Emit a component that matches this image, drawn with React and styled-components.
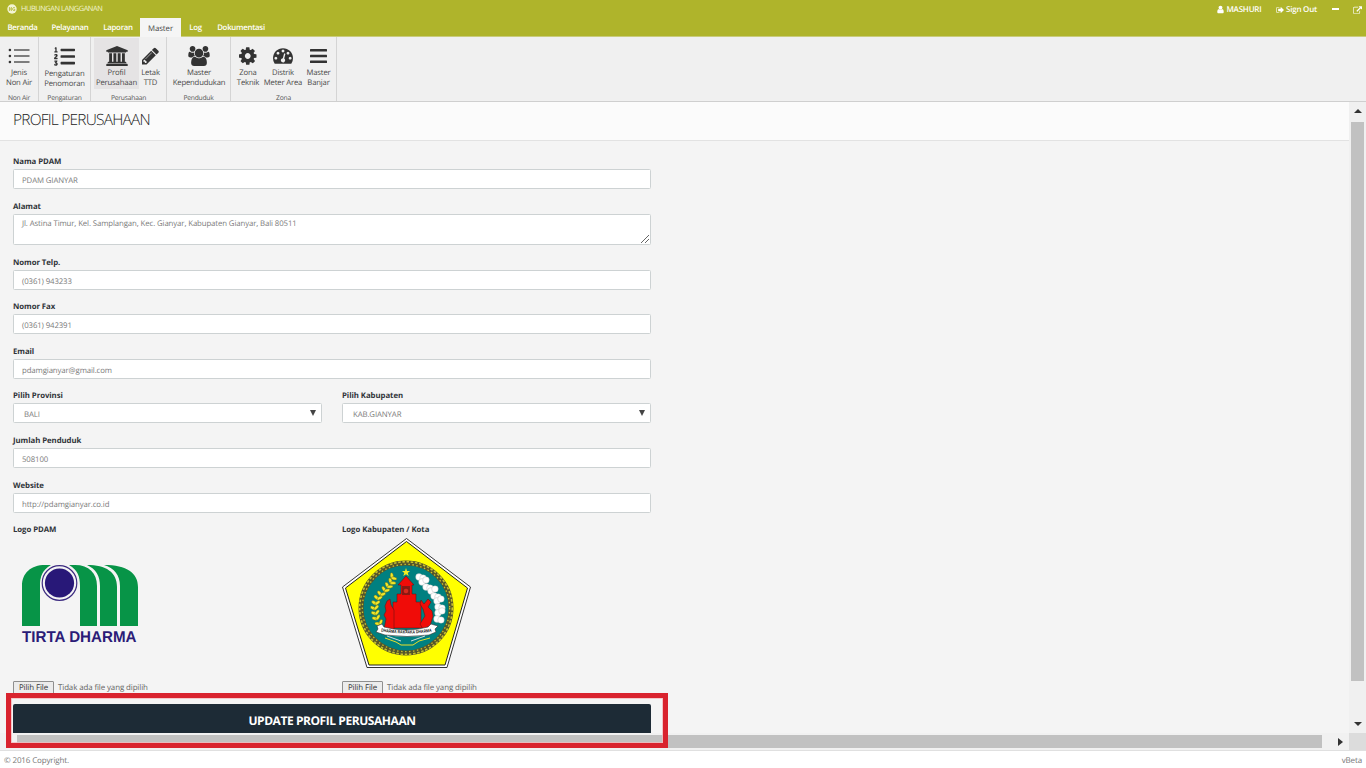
import React from 'react';
import styled, { createGlobalStyle } from 'styled-components';
import { FaListOl } from 'react-icons/fa';

const GlobalStyle = createGlobalStyle`
  * { box-sizing: border-box; }
  body {
    margin: 0;
    overflow: hidden;
    background: #fff;
    font-family: 'Open Sans', 'Noto Sans', sans-serif;
    font-size: 8px;
    color: #444;
    text-rendering: geometricPrecision;
  }
`;

const Page = styled.div`
  position: relative;
  width: 1366px;
  height: 768px;
  display: flex;
  flex-direction: column;
  overflow: hidden;
`;

const Header = styled.header`
  height: 37px;
  background: #afb42b;
  color: #fff;
  border-bottom: 1px solid #c9cc7c;
  display: flex;
  justify-content: space-between;
`;

const Brand = styled.div`
  height: 18px;
  padding-left: 7px;
  display: flex;
  align-items: center;
  gap: 4px;
  font-size: 7.4px;
  letter-spacing: -0.45px;
  line-height: 17px;
  color: #f3f4d4;

  svg { margin-top: -1px; }
`;

const Tabs = styled.nav`
  display: flex;
  height: 19px;
  padding-left: 1px;
`;

const Tab = styled.a`
  width: ${(p) => p.$width}px;
  height: ${(p) => (p.$active ? 19 : 18)}px;
  line-height: ${(p) => (p.$active ? 22 : 20)}px;
  text-align: center;
  white-space: nowrap;
  font-size: 7.8px;
  font-weight: ${(p) => (p.$active ? 400 : 600)};
  letter-spacing: ${(p) => (p.$active ? -0.05 : -0.24)}px;
  color: ${(p) => (p.$active ? '#444' : '#fff')};
  background: ${(p) => (p.$active ? '#f5f5f5' : 'transparent')};
`;

const UserBar = styled.div`
  height: 19px;
  padding-right: 4px;
  display: flex;
  align-items: center;
  font-size: 8px;
  font-weight: 600;
`;

const UserItem = styled.span`
  display: flex;
  align-items: center;
  gap: 1.5px;
  margin-left: ${(p) => p.$gap || 0}px;
  letter-spacing: -0.22px;
`;

const Dash = styled.span`
  width: 7px;
  height: 2px;
  margin: -1px 0 0 15px;
  background: #fff;
`;

const Ribbon = styled.div`
  height: 65px;
  background: #f0f0f0;
  border-bottom: 1px solid #cfcfcf;
  display: flex;
`;

const Group = styled.section`
  width: ${(p) => p.$width}px;
  border-right: 1px solid #d4d4d4;
  display: flex;
  flex-direction: column;
`;

const GroupItems = styled.div`
  display: flex;
  height: 53px;
  padding-top: 1px;
  padding-left: ${(p) => p.$inset || 0}px;
`;

const GroupName = styled.div`
  height: 11px;
  line-height: 16px;
  font-size: 6.7px;
  letter-spacing: -0.2px;
  text-align: center;
  color: #555;
`;

const RibbonButton = styled.div`
  width: ${(p) => p.$width}px;
  height: 51px;
  flex: none;
  background: ${(p) => (p.$active ? '#e5e3e4' : 'transparent')};
  color: #333;
  display: flex;
  flex-direction: column;
  align-items: center;
  padding-top: 8px;
`;

const RibbonText = styled.span`
  margin-top: 2px;
  font-size: 7.7px;
  line-height: 10px;
  letter-spacing: -0.17px;
  text-align: center;
  white-space: pre;
  color: #4a4a4a;
`;

const Workspace = styled.div`
  height: 648px;
  display: flex;
  background: #f4f4f4;
`;

const Viewport = styled.main`
  width: 1349px;
  display: flex;
  flex-direction: column;
`;

const Heading = styled.h1`
  margin: 0;
  height: 39px;
  flex: none;
  padding-left: 13px;
  background: #fbfbfb;
  border-bottom: 1px solid #e2e2e2;
  font-size: 15.5px;
  font-weight: 300;
  letter-spacing: -0.8px;
  line-height: 35px;
  color: #222;
`;

const Form = styled.form`
  height: 592px;
  width: 664px;
  padding: 12.4px 13px 0;
  overflow: hidden;
  display: flex;
  flex-direction: column;
`;

const Field = styled.div`
  width: ${(p) => (p.$half ? '309px' : 'auto')};
  margin-bottom: ${(p) => (p.$flush ? 0 : 8.6)}px;
  flex: none;
`;

const Label = styled.label`
  display: block;
  height: 16px;
  line-height: 18px;
  font-size: 7.8px;
  font-weight: 700;
  letter-spacing: -0.06px;
  color: #2f3338;
`;

const Box = styled.div`
  position: relative;
  height: ${(p) => p.$height || 20}px;
  padding: 0 8px 0 ${(p) => p.$inset || 8}px;
  background: #fff;
  border: 1px solid #cdd2d3;
  border-radius: 1.5px;
  display: flex;
  justify-content: space-between;
  line-height: ${(p) => (p.$height ? 19 : 22)}px;
  font-size: 7.8px;
  letter-spacing: -0.11px;
  white-space: nowrap;
  color: #7b7b7b;
`;

const Grip = styled.svg`
  position: absolute;
  right: 0;
  bottom: 0;
`;

const Caret = styled.span`
  width: 0;
  height: 0;
  margin: 6px -3px 0 0;
  border: 3.5px solid transparent;
  border-top: 6px solid #444;
  border-bottom: 0;
`;

const Columns = styled.div`
  display: flex;
  gap: 20px;
  flex: none;
`;

const LogoArea = styled.div`
  height: 144px;
  padding-left: ${(p) => p.$inset || 0}px;
  padding-top: ${(p) => p.$top || 0}px;
`;

const FilePicker = styled.div`
  height: 22.5px;
  display: flex;
  gap: 4px;
  font-size: 7.9px;
  line-height: 14px;
  letter-spacing: -0.1px;
  color: #666;
`;

const FileButton = styled.span`
  width: 41px;
  height: 14px;
  border: 1px solid #8f8f8f;
  border-radius: 1px;
  background: #ececec;
  text-align: center;
  line-height: 12px;
  color: #333;
`;

const Submit = styled.div`
  height: 29px;
  flex: none;
  background: #1d2b36;
  color: #fff;
  border-radius: 2px 2px 0 0;
  text-align: center;
  font-size: 12px;
  line-height: 33px;
  font-weight: 700;
  letter-spacing: -0.44px;
`;

const HScroll = styled.div`
  height: 17px;
  padding: 2px 6px 2px 17px;
  background: #f1f1f1;
  display: flex;
  align-items: center;
  justify-content: space-between;
`;

const HThumb = styled.div`
  width: 1305px;
  height: 13px;
  background: #c1c1c1;
`;

const VScroll = styled.div`
  width: 17px;
  background: #f0f0f0;
  display: flex;
  flex-direction: column;
  align-items: center;
`;

const VThumb = styled.div`
  width: 13px;
  height: 559px;
  margin: 6px 0 40px;
  background: #c1c1c1;
`;

const Corner = styled.div`
  width: 17px;
  height: 17px;
  margin-top: auto;
  background: #dcdcdc;
`;

const Arrow = styled.svg`
  flex: none;
  margin-top: ${(p) => p.$top || 0}px;
`;

const Footer = styled.footer`
  height: 18px;
  padding: 0 4px;
  background: #fff;
  border-top: 1px solid #e0e0e0;
  display: flex;
  justify-content: space-between;
  font-size: 8px;
  line-height: 19px;
  letter-spacing: -0.14px;
  color: #777;
`;

const Highlight = styled.div`
  position: absolute;
  left: 6px;
  top: 693px;
  width: 662px;
  height: 55px;
  border: 5px solid #d9232e;
  box-shadow: inset 0 0 0 0.8px #f3b9bc;
`;

const paths = {
  user: ['0 0 1792 1792', 'M1536 1399q0 109-62.5 187t-150.5 78h-854q-88 0-150.5-78t-62.5-187q0-85 8.5-160.5t31.5-152 58.5-131 94-89 134.5-34.5q131 128 313 128t313-128q76 0 134.5 34.5t94 89 58.5 131 31.5 152 8.5 160.5zm-256-887q0 159-112.5 271.5t-271.5 112.5-271.5-112.5-112.5-271.5 112.5-271.5 271.5-112.5 271.5 112.5 112.5 271.5z'],
  signOut: ['0 128 1664 1536', 'M704 1440q0 4 1 20t.5 26.5-3 23.5-10 19.5-20.5 6.5h-320q-119 0-203.5-84.5t-84.5-203.5v-704q0-119 84.5-203.5t203.5-84.5h320q13 0 22.5 9.5t9.5 22.5q0 4 1 20t.5 26.5-3 23.5-10 19.5-20.5 6.5h-320q-66 0-113 47t-47 113v704q0 66 47 113t113 47h312l11.5 1 11.5 3 8 5.5 7 9 2 13.5zm928-544q0 26-19 45l-544 544q-19 19-45 19t-45-19-19-45v-288h-448q-26 0-45-19t-19-45v-384q0-26 19-45t45-19h448v-288q0-26 19-45t45-19 45 19l544 544q19 19 19 45z'],
  external: ['0 0 1792 1536', 'M1408 928v320q0 119-84.5 203.5t-203.5 84.5h-832q-119 0-203.5-84.5t-84.5-203.5v-832q0-119 84.5-203.5t203.5-84.5h704q14 0 23 9t9 23v64q0 14-9 23t-23 9h-704q-66 0-113 47t-47 113v832q0 66 47 113t113 47h832q66 0 113-47t47-113v-320q0-14 9-23t23-9h64q14 0 23 9t9 23zm384-864v512q0 26-19 45t-45 19-45-19l-176-176-652 652q-10 10-23 10t-23-10l-114-114q-10-10-10-23t10-23l652-652-176-176q-19-19-19-45t19-45 45-19h512q26 0 45 19t19 45z'],
  university: ['0 0 1920 1792', 'M960 0l960 384v128h-128q0 26-20.5 45t-48.5 19h-1526q-28 0-48.5-19t-20.5-45h-128v-128zM256 640h256v768h128v-768h256v768h128v-768h256v768h128v-768h256v768h59q28 0 48.5 19t20.5 45v64h-1664v-64q0-26 20.5-45t48.5-19h59zM1851 1600q28 0 48.5 19t20.5 45v128h-1920v-128q0-26 20.5-45t48.5-19z'],
  pencil: ['128 128 1536 1536', 'M491 1536l91-91-235-235-91 91v107h128v128h107zm523-928q0-22-22-22-10 0-17 7l-542 542q-7 7-7 17 0 22 22 22 10 0 17-7l542-542q7-7 7-17zm-54-192l416 416-832 832h-416v-416zm683 96q0 53-37 90l-166 166-416-416 166-165q36-38 90-38 53 0 91 38l235 234q37 39 37 91z'],
  users: ['64 0 1920 1792', 'M657 896q-162 5-265 128h-134q-82 0-138-40.5t-56-118.5q0-353 124-353 6 0 43.5 21t97.5 42.5 119 21.5q67 0 133-23-5 37-5 66 0 139 81 256zm1071 637q0 120-73 189.5t-194 69.5h-874q-121 0-194-69.5t-73-189.5q0-53 3.5-103.5t14-109 26.5-108.5 43-97.5 62-81 85.5-53.5 111.5-20q10 0 43 21.5t73 48 107 48 135 21.5 135-21.5 107-48 73-48 43-21.5q61 0 111.5 20t85.5 53.5 62 81 43 97.5 26.5 108.5 14 109 3.5 103.5zm-1024-1277q0 106-75 181t-181 75-181-75-75-181 75-181 181-75 181 75 75 181zm704 384q0 159-112.5 271.5t-271.5 112.5-271.5-112.5-112.5-271.5 112.5-271.5 271.5-112.5 271.5 112.5 112.5 271.5zm576 225q0 78-56 118.5t-138 40.5h-134q-103-123-265-128 81-117 81-256 0-29-5-66 66 23 133 23 59 0 119-21.5t97.5-42.5 43.5-21q124 0 124 353zm-128-609q0 106-75 181t-181 75-181-75-75-181 75-181 181-75 181 75 75 181z'],
  cog: ['128 128 1536 1536', 'M1152 896q0-106-75-181t-181-75-181 75-75 181 75 181 181 75 181-75 75-181zm512-109v222q0 12-8 23t-20 13l-185 28q-19 54-39 91 35 50 107 138 10 12 10 25t-9 23q-27 37-99 108t-94 71q-12 0-26-9l-138-108q-44 23-91 38-16 136-29 186-7 28-36 28h-222q-14 0-24.5-8.5t-11.5-21.5l-28-184q-49-16-90-37l-141 107q-10 9-25 9-14 0-25-11-126-114-165-168-7-10-7-23 0-12 8-23 15-21 51-66.5t54-70.5q-27-50-41-99l-183-27q-13-2-21-12.5t-8-23.5v-222q0-12 8-23t19-13l186-28q14-46 39-92-40-57-107-138-10-12-10-24 0-10 9-23 26-36 98.5-107.5t94.5-71.5q13 0 26 10l138 107q44-23 91-38 16-136 29-186 7-28 36-28h222q14 0 24.5 8.5t11.5 21.5l28 184q49 16 90 37l142-107q9-9 24-9 13 0 25 10 129 119 165 170 7 8 7 22 0 12-8 23-15 21-51 66.5t-54 70.5q26 50 41 98l183 28q13 2 21 12.5t8 23.5z'],
  gauge: ['0 256 1792 1408', 'M384 1152q0-53-37.5-90.5t-90.5-37.5-90.5 37.5-37.5 90.5 37.5 90.5 90.5 37.5 90.5-37.5 37.5-90.5zm192-448q0-53-37.5-90.5t-90.5-37.5-90.5 37.5-37.5 90.5 37.5 90.5 90.5 37.5 90.5-37.5 37.5-90.5zm428 481l101-382q6-26-7.5-48.5t-38.5-29.5-48 6.5-30 39.5l-101 382q-60 5-107 43.5t-63 98.5q-20 77 20 146t117 89 146-20 89-117q16-60-6-117t-72-91zm660-33q0-53-37.5-90.5t-90.5-37.5-90.5 37.5-37.5 90.5 37.5 90.5 90.5 37.5 90.5-37.5 37.5-90.5zm-640-640q0-53-37.5-90.5t-90.5-37.5-90.5 37.5-37.5 90.5 37.5 90.5 90.5 37.5 90.5-37.5 37.5-90.5zm448 192q0-53-37.5-90.5t-90.5-37.5-90.5 37.5-37.5 90.5 37.5 90.5 90.5 37.5 90.5-37.5 37.5-90.5zm320 448q0 261-141 483-19 29-54 29h-1402q-35 0-54-29-141-221-141-483 0-182 71-348t191-286 286-191 348-71 348 71 286 191 191 286 71 348z'],
};

const Glyph = ({ name, width, height }) => (
  <svg width={width} height={height} viewBox={paths[name][0]} fill="currentColor">
    <path d={paths[name][1]} />
  </svg>
);

const BulletList = () => (
  <svg width="22" height="20" viewBox="0 0 22 20" fill="currentColor">
    {[4, 10, 16].map((y) => (
      <g key={y}>
        <circle cx="1.9" cy={y} r="1.3" />
        <rect x="6" y={y - 0.6} width="15.5" height="1.2" />
      </g>
    ))}
  </svg>
);

const Bars = () => (
  <svg width="17" height="20" viewBox="0 0 17 20" fill="currentColor">
    {[3, 8.7, 14.4].map((y) => (
      <rect key={y} x="0" y={y} width="17" height="2.6" rx="0.5" />
    ))}
  </svg>
);

const BrandMark = () => (
  <svg width="10" height="10" viewBox="0 0 10 10">
    <circle cx="5" cy="5" r="4.7" fill="#f3f4d4" />
    <path d="M2.4 3v4M2.4 5h1.8M4.3 3v4M7.8 3.6A1.6 1.6 0 1 0 7.8 6.5V5.2H6.6" fill="none" stroke="#afb42b" strokeWidth="0.8" />
  </svg>
);

const TirtaLogo = () => (
  <svg width="120" height="84" viewBox="0 0 120 84">
    <g fill="#079447">
      <path d="M1 62V22C1 9 10 1 24 1h6C21 6 19 13 19 22v40z" />
      <path d="M48 1h6c14 0 22 8 22 21v40H59V22C59 13 57 6 48 1z" />
      <path d="M66 1c19 0 30 7 30 22v39H79V22C79 12 75 5 66 1z" />
      <path d="M83 1c23 0 34 8 34 22v39H99V22C99 11 93 4 83 1z" />
    </g>
    <circle cx="38.500" cy="19" r="19" fill="#f4f4f4" />
    <circle cx="38.500" cy="19" r="17.300" fill="none" stroke="#3c2b80" strokeWidth="1.200" />
    <circle cx="38.500" cy="19" r="14.600" fill="#281878" />
    <text x="1" y="77.500" fontFamily="Liberation Sans" fontWeight="700" fontSize="15.500" textLength="114.500" lengthAdjust="spacingAndGlyphs" fill="#2b1b77">TIRTA DHARMA</text>
  </svg>
);

const leaves = [[42, 41, 50], [41, 46, 40], [38, 50, 30], [35, 54, 24], [31, 58, 16], [28, 62, 8], [26, 67, 0], [25, 72, -8], [26, 77, -14], [27, 82, -20], [30, 87, -28]];
const cotton = [[78, 40], [81, 45], [85, 50], [90, 54], [93, 59], [96, 64], [97, 70], [97, 76], [96, 82]];

const GianyarEmblem = () => (
  <svg width="131" height="132" viewBox="1 0 131 132">
    <path d="M65.500 1.500L129.500 50L106 130.500H26L1.500 50z" fill="#fff" stroke="#333" strokeWidth="1" />
    <path d="M65.500 4.500L126.500 51L104 128H28L4.500 51z" fill="#ff0" stroke="#222" strokeWidth="1" />
    <circle cx="65" cy="71" r="44.500" fill="#008080" />
    <circle cx="65" cy="71" r="45" fill="none" stroke="#55552a" strokeWidth="5" />
    <circle cx="65" cy="71" r="46.300" fill="none" stroke="#c9c22e" strokeWidth="1.600" strokeDasharray="2.500 1.700" />
    <circle cx="65" cy="71" r="43.700" fill="none" stroke="#c9c22e" strokeWidth="1.300" strokeDasharray="1.500 2.500" />
    <path d="M65 31l1 3h3l-2.300 2 1 3-2.700-1.800-2.700 1.800 1-3-2.300-2h3z" fill="#f4ee20" />
    {leaves.map(([x, y, r]) => (
      <g key={y} transform={`translate(${x + 9} ${y}) rotate(${r})`} fill="#f1e92a" stroke="#5c5b12" strokeWidth="0.400">
        <ellipse cx="-2" cy="0" rx="3.200" ry="1.600" transform="rotate(35)" />
        <ellipse cx="2" cy="0" rx="3" ry="1.500" transform="rotate(-38)" />
      </g>
    ))}
    {cotton.map(([x, y], i) => (
      <g key={y} fill="#fff" stroke="#999" strokeWidth="0.300">
        <circle cx={x} cy={y} r="3.400" />
        <circle cx={x + 4} cy={y + (i % 2 ? -2 : 1)} r="3.300" />
      </g>
    ))}
    <g fill="#f00c08" stroke="#5a1210" strokeWidth="0.500">
      <path d="M65 39l8 9h-2v9h4v8h5v21l8 5H43l9-6V65h4v-8h4v-9h-3z" />
      <path d="M46 64l3-2 1 6 3 5v19H43l2-10-2-4 2-4-1-5z" />
      <path d="M80 63l3 4 4-5 3 3-3 5 4 4 1 5-3 10-7 3-3-5 5-8-2-7-3-5z" />
    </g>
    <rect x="61" y="49" width="8" height="9" fill="#8b1a12" />
    <circle cx="65" cy="54" r="2.800" fill="#d62a1d" stroke="#5a1210" strokeWidth="0.500" />
    <path d="M36 89l5-2 2 3q22 6 44 0l3-3 7 2-3 3 1 3-7 3q-22 3-44 0l-9-3 2-3z" fill="#fff" stroke="#333" strokeWidth="0.600" />
    <path id="motto" d="M40 94.500Q65 98.500 92 94.500" fill="none" />
    <text fontFamily="Liberation Sans" fontSize="4.500" fontWeight="700" fill="#111">
      <textPath href="#motto" textLength="51" lengthAdjust="spacingAndGlyphs">DHARMA RAKSAKA DHARMA</textPath>
    </text>
    <path d="M44 101l11 4 5 3h12l6-4 11-3" fill="none" stroke="#e9df2b" strokeWidth="1" />
    <path d="M46 99l14 5M84 99l-14 5" fill="none" stroke="#e8e8e8" strokeWidth="0.900" />
  </svg>
);

const tabs = [['Beranda', 43], ['Pelayanan', 52], ['Laporan', 44], ['Master', 41, true], ['Log', 29], ['Dokumentasi', 62]];

const groups = [
  { name: 'Non Air', width: 39, items: [['Jenis\nNon Air', 38, <BulletList />]] },
  { name: 'Pengaturan', width: 52, items: [['Pengaturan\nPenomoran', 51, <FaListOl size={21} />]] },
  { name: 'Perusahaan', width: 76, inset: 3, items: [
    ['Profil\nPerusahaan', 45, <Glyph name="university" width={22} height={20} />, true],
    ['Letak\nTTD', 23, <Glyph name="pencil" width={17} height={20} />],
  ] },
  { name: 'Penduduk', width: 64, items: [['Master\nKependudukan', 64, <Glyph name="users" width={22} height={20} />]] },
  { name: 'Zona', width: 106, items: [
    ['Zona\nTeknik', 34, <Glyph name="cog" width={17.5} height={20} />],
    ['Distrik\nMeter Area', 36, <Glyph name="gauge" width={20} height={20} />],
    ['Master\nBanjar', 35, <Bars />],
  ] },
];

const TextField = ({ label, value }) => (
  <Field>
    <Label>{label}</Label>
    <Box>{value}</Box>
  </Field>
);

const SelectField = ({ label, value }) => (
  <Field $half>
    <Label>{label}</Label>
    <Box $inset={10}>{value}<Caret /></Box>
  </Field>
);

const FileField = () => (
  <FilePicker>
    <FileButton>Pilih File</FileButton>
    <span>Tidak ada file yang dipilih</span>
  </FilePicker>
);

export default function App() {
  return (
    <Page>
      <GlobalStyle />
      <Header>
        <div>
          <Brand><BrandMark />HUBUNGAN LANGGANAN</Brand>
          <Tabs>
            {tabs.map(([name, width, active]) => (
              <Tab key={name} $width={width} $active={active}>{name}</Tab>
            ))}
          </Tabs>
        </div>
        <UserBar>
          <UserItem><Glyph name="user" width={9} height={9} />MASHURI</UserItem>
          <UserItem $gap={15}><Glyph name="signOut" width={8} height={8} />Sign Out</UserItem>
          <Dash />
          <UserItem $gap={14}><Glyph name="external" width={9} height={8} /></UserItem>
        </UserBar>
      </Header>
      <Ribbon>
        {groups.map((g) => (
          <Group key={g.name} $width={g.width}>
            <GroupItems $inset={g.inset}>
              {g.items.map(([text, width, icon, active]) => (
                <RibbonButton key={text} $width={width} $active={active}>
                  {icon}
                  <RibbonText>{text}</RibbonText>
                </RibbonButton>
              ))}
            </GroupItems>
            <GroupName>{g.name}</GroupName>
          </Group>
        ))}
      </Ribbon>
      <Workspace>
        <Viewport>
          <Heading>PROFIL PERUSAHAAN</Heading>
          <Form>
            <TextField label="Nama PDAM" value="PDAM GIANYAR" />
            <Field>
              <Label>Alamat</Label>
              <Box $height={31}>
                Jl. Astina Timur, Kel. Samplangan, Kec. Gianyar, Kabupaten Gianyar, Bali 80511
                <Grip width="10" height="10" viewBox="0 0 10 10" stroke="#555" strokeWidth="0.9">
                  <path d="M1 9L9 1M5 9L9 5" />
                </Grip>
              </Box>
            </Field>
            <TextField label="Nomor Telp." value="(0361) 943233" />
            <TextField label="Nomor Fax" value="(0361) 942391" />
            <TextField label="Email" value="pdamgianyar@gmail.com" />
            <Columns>
              <SelectField label="Pilih Provinsi" value="BALI" />
              <SelectField label="Pilih Kabupaten" value="KAB.GIANYAR" />
            </Columns>
            <TextField label="Jumlah Penduduk" value="508100" />
            <TextField label="Website" value="http://pdamgianyar.co.id" />
            <Columns>
              <Field $half $flush>
                <Label>Logo PDAM</Label>
                <LogoArea $inset={8} $top={27}><TirtaLogo /></LogoArea>
                <FileField />
              </Field>
              <Field $half $flush>
                <Label>Logo Kabupaten / Kota</Label>
                <LogoArea><GianyarEmblem /></LogoArea>
                <FileField />
              </Field>
            </Columns>
            <Submit>UPDATE PROFIL PERUSAHAAN</Submit>
          </Form>
          <HScroll>
            <HThumb />
            <Arrow width="5" height="8" viewBox="0 0 5 8"><path d="M0 0l5 4-5 4z" fill="#333" /></Arrow>
          </HScroll>
        </Viewport>
        <VScroll>
          <Arrow $top={6} width="8" height="8" viewBox="0 0 8 8"><path d="M0 5l4-4 4 4z" fill="#333" /></Arrow>
          <VThumb />
          <Arrow width="8" height="6" viewBox="0 0 8 6"><path d="M0 1h8L4 5z" fill="#333" /></Arrow>
          <Corner />
        </VScroll>
      </Workspace>
      <Footer><span>© 2016 Copyright.</span><span>vBeta</span></Footer>
      <Highlight />
    </Page>
  );
}
